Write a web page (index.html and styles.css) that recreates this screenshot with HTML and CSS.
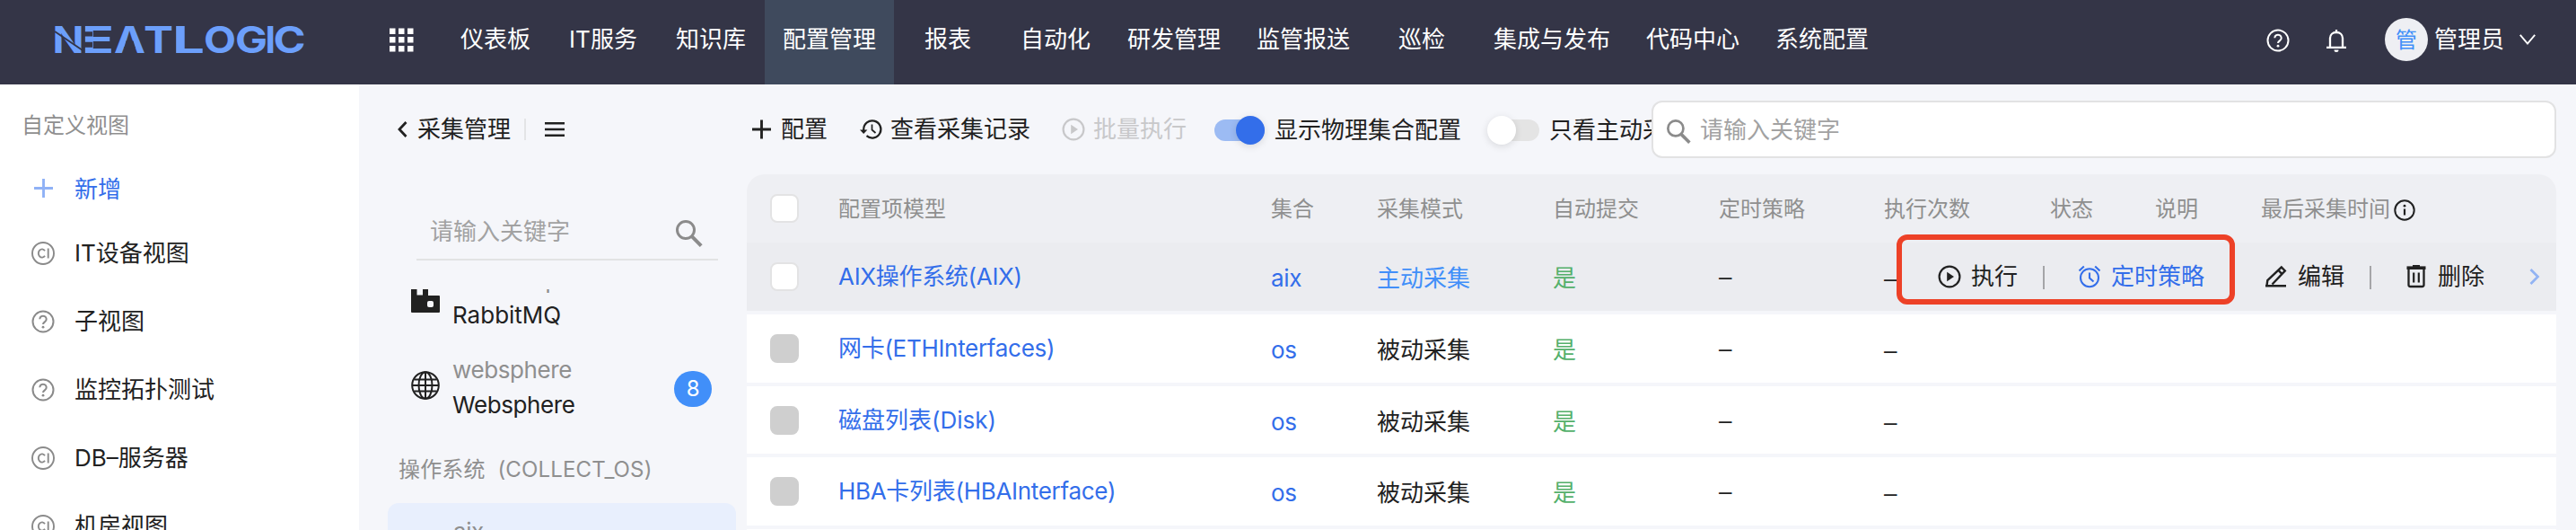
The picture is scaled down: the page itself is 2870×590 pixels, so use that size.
FILE: index.html
```html
<!DOCTYPE html>
<html lang="zh-CN">
<head>
<meta charset="utf-8">
<title>采集管理</title>
<link rel="stylesheet" href="styles.css">
</head>
<body>
<svg class="defs" width="0" height="0">
  <symbol id="i-help" viewBox="0 0 26 26"><g fill="none" stroke="currentColor" stroke-width="2"><circle cx="13" cy="13" r="11.5"/><path d="M9.3 10.2a3.7 3.5 0 1 1 5.8 2.9c-1.4 1-2.1 1.6-2.1 3"/></g><circle cx="13" cy="19.2" r="1.4" fill="currentColor"/></symbol>
  <symbol id="i-ci" viewBox="0 0 26 26"><g fill="none" stroke="currentColor" stroke-width="1.9"><circle cx="13" cy="13" r="12"/><path d="M15 10.2a4 4.6 0 1 0 0 5.6M18.7 7.6v10.8"/></g></symbol>
  <symbol id="i-plus" viewBox="0 0 22 22"><path d="M11 0v22M0 11h22" fill="none" stroke="currentColor" stroke-width="3"/></symbol>
  <symbol id="i-search" viewBox="0 0 30 30"><g fill="none" stroke="currentColor" stroke-width="3"><circle cx="11" cy="11" r="9.5"/><path d="M17.8 18.2l10.4 10.4" stroke-width="4"/></g></symbol>
  <symbol id="i-play" viewBox="0 0 26 26"><circle cx="13" cy="13" r="11.4" fill="none" stroke="currentColor" stroke-width="2.2"/><path d="M10.2 7.8l7.8 5.2-7.8 5.2z" fill="currentColor"/></symbol>
</svg>

<header class="topbar">
  <svg class="logo" viewBox="0 0 284 36" role="img" aria-label="NEATLOGIC">
    <text class="logo-text" y="33"><tspan x="-2.500" textLength="35" lengthAdjust="spacingAndGlyphs">N</tspan><tspan x="30" textLength="36" lengthAdjust="spacingAndGlyphs">E</tspan><tspan x="66" textLength="35" lengthAdjust="spacingAndGlyphs">A</tspan><tspan x="99" textLength="33" lengthAdjust="spacingAndGlyphs">T</tspan><tspan x="131" textLength="36" lengthAdjust="spacingAndGlyphs">L</tspan><tspan x="166" textLength="36" lengthAdjust="spacingAndGlyphs">O</tspan><tspan x="201" textLength="36" lengthAdjust="spacingAndGlyphs">G</tspan><tspan x="234.500">I</tspan><tspan x="243.500" textLength="36" lengthAdjust="spacingAndGlyphs">C</tspan></text>
    <path class="logo-cut" d="M32 9.200h10v5.300h-10zM32 20.800h10v6h-10zM79.500 19.500h8l2.500 8h-13z"/>
    <path class="logo-cut-line" d="M0 9l31 21"/>
  </svg>
  <svg class="apps" viewBox="0 0 27 27"><path fill="#fff" d="M0 .5h6.5V7H0zM10 .5h6.5V7H10zM20 .5h6.5V7H20zM0 10h6.5v6.5H0zM10 10h6.5v6.5H10zM20 10h6.5v6.5H20zM0 20h6.5v6.5H0zM10 20h6.5v6.5H10zM20 20h6.5v6.5H20z"/></svg>
  <nav class="nav">
    <a>仪表板</a><a>IT服务</a><a>知识库</a><a class="active">配置管理</a><a>报表</a><a>自动化</a><a>研发管理</a><a>监管报送</a><a>巡检</a><a>集成与发布</a><a>代码中心</a><a>系统配置</a>
  </nav>
  <div class="user">
    <svg class="help"><use href="#i-help"/></svg>
    <svg class="bell" viewBox="0 0 22 27"><path d="M4 20.5V10.5C4 6.5 7 4 11 4s7 2.500 7 6.500v10M0 20.800h22M11 1v3" fill="none" stroke="#fff" stroke-width="2.300"/><path d="M8.500 23.500h5a2.500 2.500 0 0 1-5 0z" fill="#fff"/></svg>
    <span class="avatar">管</span>
    <span class="uname">管理员</span>
    <svg class="chev" viewBox="0 0 18 12"><path d="M.8.8L9 10.600 17.200.8" fill="none" stroke="#fff" stroke-width="1.900"/></svg>
  </div>
</header>

<div class="layout">
  <aside class="side">
    <h2>自定义视图</h2>
    <a class="add"><span class="ico"><svg class="plus"><use href="#i-plus"/></svg></span>新增</a>
    <a><span class="ico"><svg><use href="#i-ci"/></svg></span>IT设备视图</a>
    <a><span class="ico"><svg><use href="#i-help"/></svg></span>子视图</a>
    <a><span class="ico"><svg><use href="#i-help"/></svg></span>监控拓扑测试</a>
    <a><span class="ico"><svg><use href="#i-ci"/></svg></span>DB–服务器</a>
    <a><span class="ico"><svg><use href="#i-ci"/></svg></span>机房视图</a>
  </aside>

  <section class="tree">
    <div class="crumb">
      <svg class="back" viewBox="0 0 11 18"><path d="M9.500 1L2 9l7.500 8" fill="none" stroke="#212121" stroke-width="2.800"/></svg>
      <span>采集管理</span>
      <i class="sep"></i>
      <svg class="burger" viewBox="0 0 22 16"><path d="M0 1.300h22M0 8h22M0 14.700h22" stroke="#212121" stroke-width="2.500"/></svg>
    </div>
    <div class="filter"><span>请输入关键字</span><svg><use href="#i-search"/></svg></div>
    <div class="list">
      <div class="node rabbit">
        <svg class="nicon" viewBox="0 0 32 32"><path fill="#212121" d="M1 0h5.500v12.500h6.500V0h6v13H31a1 1 0 0 1 1 1v17a1 1 0 0 1-1 1H1a1 1 0 0 1-1-1V1a1 1 0 0 1 1-1z"/><rect x="18" y="19" width="7" height="7" rx="2" fill="#f5f6fa"/></svg>
        <div><p class="key">rabbitmq</p><p>RabbitMQ</p></div>
      </div>
      <div class="node web">
        <svg class="nicon" viewBox="0 0 32 32"><g fill="none" stroke="#212121" stroke-width="2"><circle cx="16" cy="16" r="14.800"/><ellipse cx="16" cy="16" rx="7.500" ry="14.800"/><path d="M16 1v30M1 16h30M3.500 9.500h25M3.500 22.500h25"/></g></svg>
        <div><p class="key">websphere</p><p>Websphere</p></div>
        <b class="badge">8</b>
      </div>
      <div class="group">操作系统&nbsp; (COLLECT_OS)</div>
      <div class="node current"><p class="key">aix</p></div>
    </div>
  </section>

  <main class="main">
    <div class="toolbar">
      <div class="tools">
        <span class="tool t-add"><svg><use href="#i-plus"/></svg>配置</span>
        <span class="tool t-log"><svg viewBox="0 0 25 22"><g fill="none" stroke="#212121" stroke-width="2.200"><path d="M4.200 14V11a9.600 9.600 0 1 1 3.300 7.200"/><path d="M13.500 5.500v6l4 3.500" stroke-width="1.700"/></g><path d="M0 11.500h8.400L4.200 16z" fill="#212121"/></svg>查看采集记录</span>
        <span class="tool t-batch"><svg><use href="#i-play"/></svg>批量执行</span>
        <i class="switch on"></i><span class="label l1">显示物理集合配置</span>
        <i class="switch off"></i><span class="label l2">只看主动采集</span>
      </div>
      <div class="search"><svg><use href="#i-search"/></svg>请输入关键字</div>
    </div>

    <div class="table">
      <div class="row head">
        <span><i class="check"></i></span><span>配置项模型</span><span>集合</span><span>采集模式</span><span>自动提交</span><span>定时策略</span><span>执行次数</span><span>状态</span><span>说明</span>
        <span class="last">最后采集时间<svg viewBox="0 0 24 24"><circle cx="12" cy="12" r="10.700" fill="none" stroke="#212121" stroke-width="2"/><path d="M12 10.500v7" stroke="#212121" stroke-width="2.200"/><circle cx="12" cy="7.200" r="1.400" fill="#212121"/></svg></span>
      </div>
      <div class="row hover">
        <span><i class="check"></i></span><span class="link">AIX操作系统(AIX)</span><span class="link d">aix</span><span class="auto d">主动采集</span><span class="yes d">是</span><span class="dash">–</span><span class="dash e">–</span>
        <div class="actions">
          <span class="act a1"><svg><use href="#i-play"/></svg>执行</span><i class="bar"></i>
          <span class="act a2"><svg viewBox="0 0 26 26"><g fill="none" stroke="currentColor" stroke-width="2.100"><circle cx="13" cy="14.200" r="10"/><path d="M13 8.500v6l4.500 4M1.500 6.500L6.800 1.500M24.500 6.500L19.200 1.500"/></g></svg>定时策略</span>
          <span class="act a3"><svg viewBox="0 0 26 26"><path d="M2.500 22.800l.8-5.800L18.800 2.500l4 4L8.500 21.500M15.500 6l3.800 3.800M1 23.200h23" fill="none" stroke="currentColor" stroke-width="2.400"/></svg>编辑</span><i class="bar"></i>
          <span class="act a4"><svg viewBox="0 0 26 26"><path d="M2.500 3.200h21" stroke="currentColor" stroke-width="3.600"/><path d="M9 1.300h8" stroke="currentColor" stroke-width="2.600"/><path d="M4.500 5v17q0 2 2 2h13q2 0 2-2V5" fill="none" stroke="currentColor" stroke-width="2.300"/><path d="M10.200 8.500v11M15.800 8.500v11" stroke="currentColor" stroke-width="2.200"/></svg>删除</span>
          <svg class="more" viewBox="0 0 12 18"><path d="M1.500 1l8 8-8 8" fill="none" stroke="#92b3f3" stroke-width="2.700"/></svg>
        </div>
        <div class="mark"></div>
      </div>
      <div class="row">
        <span><i class="check off"></i></span><span class="link">网卡(ETHInterfaces)</span><span class="link d">os</span><span class="d">被动采集</span><span class="yes d">是</span><span class="dash">–</span><span class="dash e">–</span>
      </div>
      <div class="row short">
        <span><i class="check off"></i></span><span class="link wide">磁盘列表(Disk)</span><span class="link d">os</span><span class="d">被动采集</span><span class="yes d">是</span><span class="dash">–</span><span class="dash e">–</span>
      </div>
      <div class="row last-row">
        <span><i class="check off"></i></span><span class="link">HBA卡列表(HBAInterface)</span><span class="link d">os</span><span class="d">被动采集</span><span class="yes d">是</span><span class="dash">–</span><span class="dash e">–</span>
      </div>
      <div class="row next"></div>
    </div>
  </main>
</div>
</body>
</html>
```

FILE: styles.css
```css
* { box-sizing: border-box; margin: 0; padding: 0; }
html, body { height: 590px; overflow: hidden; }
body {
  width: 2870px;
  background: #f5f6fa;
  color: #212121;
  font: 400 26px/40px Inter, "Noto Sans CJK SC", sans-serif;
  white-space: nowrap;
}
svg { display: block; flex: none; width: 26px; height: 26px; overflow: visible; }
.defs { position: absolute; width: 0; height: 0; }
i, b { font-style: normal; font-weight: 400; flex: none; }

/* top bar */
.topbar { display: flex; align-items: center; height: 94px; background: #343547; color: #fff; }
.topbar .logo { width: 284px; height: 36px; margin: -6px 0 0 61px; }
.logo-text { font: 700 41px Inter, sans-serif; fill: #6c9ffb; }
.logo-cut { fill: #343547; }
.logo-cut-line { fill: none; stroke: #343547; stroke-width: 2; }
.topbar .apps { width: 27px; height: 27px; margin: -6px 31px 0 89px; }
.nav { display: flex; height: 94px; }
.nav a { min-width: 120px; padding: 24px 20px 0; text-align: center; }
.nav .active { background: #3f4a5d; }
.user { display: flex; align-items: center; height: 88px; margin: -6px 45px 0 auto; }
.user .help { margin: 2px 41px 0 0; }
.user .bell { width: 22px; height: 27px; margin: 2px 43px 0 0; }
.avatar { width: 48px; height: 48px; border-radius: 50%; background: #eeeff3; color: #418ff9; font-size: 24px; line-height: 50px; text-align: center; }
.uname { margin-left: 7px; }
.user .chev { width: 18px; height: 12px; margin-left: 17px; }

.layout { display: flex; height: 496px; overflow: hidden; }

/* custom views */
.side { width: 400px; background: #fff; padding-top: 26px; }
.side h2 { padding-left: 24px; font-size: 24px; font-weight: 400; color: #8f8f8f; height: 72px; }
.side a { display: flex; align-items: center; height: 76px; padding-left: 35px; }
.side .add { height: 38px; margin-bottom: 14px; color: #336eea; }
.side .ico { width: 26px; margin-right: 22px; color: #8a8a8a; }
.side .add .ico { color: #8fb1f6; }
.side .plus { width: 21px; height: 21px; margin: -3px 0 0 3px; }

/* model tree */
.tree { width: 432px; }
.crumb { display: flex; align-items: center; height: 100px; padding-left: 43px; }
.crumb .back { width: 11px; height: 18px; margin-right: 11px; }
.crumb .sep { width: 2px; height: 24px; margin: 0 21px 0 15px; background: #e3e4e6; }
.crumb .burger { width: 22px; height: 16px; }
.filter { display: flex; justify-content: space-between; align-items: center; height: 66px; margin: 30px 32px 0 64px; padding: 4px 17px 0 15px; border-bottom: 2px solid #e2e3e4; color: #a2a2a2; }
.filter svg { width: 30px; height: 30px; margin-top: 4px; color: #8b8b8b; }
.list { height: 268px; margin-top: 32px; overflow: hidden; }
.node { display: flex; align-items: center; height: 99px; padding-left: 58px; }
.node.rabbit { height: 72px; margin-top: -27px; margin-bottom: 14px; }
.node.rabbit .nicon { margin-top: 12px; margin-bottom: 10px; }
.nicon { width: 32px; height: 32px; margin-right: 14px; }
.web { letter-spacing: -.4px; }
.web .nicon { margin-bottom: 3px; }
.node p { line-height: 39px; }
.node .key { color: #8f8f8f; }
.badge { width: 42px; height: 40px; margin: 4px 39px 0 auto; border-radius: 20px; background: #418ff9; color: #fff; font-size: 24px; text-align: center; }
.group { padding: 23px 0 17px 44px; font-size: 24px; letter-spacing: .15px; color: #8f8f8f; }
.node.current { align-items: flex-start; margin: 0 12px 0 32px; padding: 12px 0 0 73px; border-radius: 12px; background: #e8effd; }
.current .key { letter-spacing: -.4px; }

/* content */
.main { width: 2016px; }
.toolbar { display: flex; align-items: center; height: 100px; }
.tools { display: flex; align-items: center; width: 1008px; height: 60px; overflow: hidden; }
.tool { display: flex; align-items: center; }
.t-add { margin-left: 6px; }
.t-add svg { width: 21px; height: 22px; margin-right: 11px; }
.t-log { margin-left: 36px; }
.t-log svg { width: 25px; height: 22px; margin-right: 9px; }
.t-batch { margin-left: 35px; color: #c8c8ca; }
.t-batch svg { margin-right: 9px; }
.switch { position: relative; width: 56px; height: 24px; margin: 2px 0 0 31px; border-radius: 12px; background: #e4e4e4; }
.switch::after { content: ""; position: absolute; left: -2px; top: -4px; width: 32px; height: 32px; border-radius: 50%; background: #fff; box-shadow: 0 2px 8px rgba(0, 0, 0, .12); }
.switch.on { background: #9cbbf3; }
.switch.on::after { left: 24px; background: #336eea; }
.label { margin-left: 11px; padding-top: 2px; }
.search { display: flex; align-items: center; flex: 1; height: 64px; padding: 2px 0 0 15px; border: 2px solid #e2e2e3; border-radius: 12px; background: #fff; color: #a2a2a2; }
.search svg { width: 27px; height: 27px; margin: 2px 10px 0 0; color: #8b8b8b; }

.row { position: relative; display: grid; grid-template-columns: 102px 482px 118px 196px 185px 184px 185px 117px 118px 1fr; align-items: center; height: 76px; margin-bottom: 4px; background: #fff; }
.row.short { height: 75px; }
.row.head { margin-bottom: 0; border-radius: 20px 20px 0 0; background: #eeeff3; color: #8f8f8f; font-size: 24px; }
.row.head > span:not(:first-child) { padding-top: 2px; }
.row.hover { background: #ebecf0; }
.row.next { height: 1px; margin: 0; }
.check { display: block; width: 32px; height: 32px; margin-left: 26px; border: 2px solid #e3e3e4; border-radius: 8px; background: #fff; }
.check.off { border-color: #cfcfcf; background: #cfcfcf; }
.last { display: flex; align-items: center; }
.last svg { width: 24px; height: 24px; margin: 2px 0 0 4px; }
.link { color: #336eea; letter-spacing: -.3px; }
.link.wide { letter-spacing: 0; }
.d { padding-top: 4px; }
.auto { color: #418ff9; }
.yes { color: #54b06b; }
.dash { font-family: "Liberation Sans", sans-serif; }
.dash.e { padding-top: 4px; }

/* row actions float over the trailing cells */
.actions { position: absolute; top: 0; right: 0; display: flex; align-items: center; width: 730px; height: 76px; padding-left: 41px; background: #ebecf0; }
.act { display: flex; align-items: center; }
.act svg { margin-right: 11px; }
.a2 { color: #336eea; margin-left: 37px; margin-right: 67px; }
.bar { width: 2px; height: 26px; margin: 2px 0 0 28px; background: #a5a5a8; }
.a4 { margin-left: 37px; }
.actions .more { width: 12px; height: 18px; margin-left: 50px; }
.mark { position: absolute; left: 1281px; top: -9px; width: 377px; height: 78px; border: 6px solid #ed4127; border-radius: 12px; }
```
